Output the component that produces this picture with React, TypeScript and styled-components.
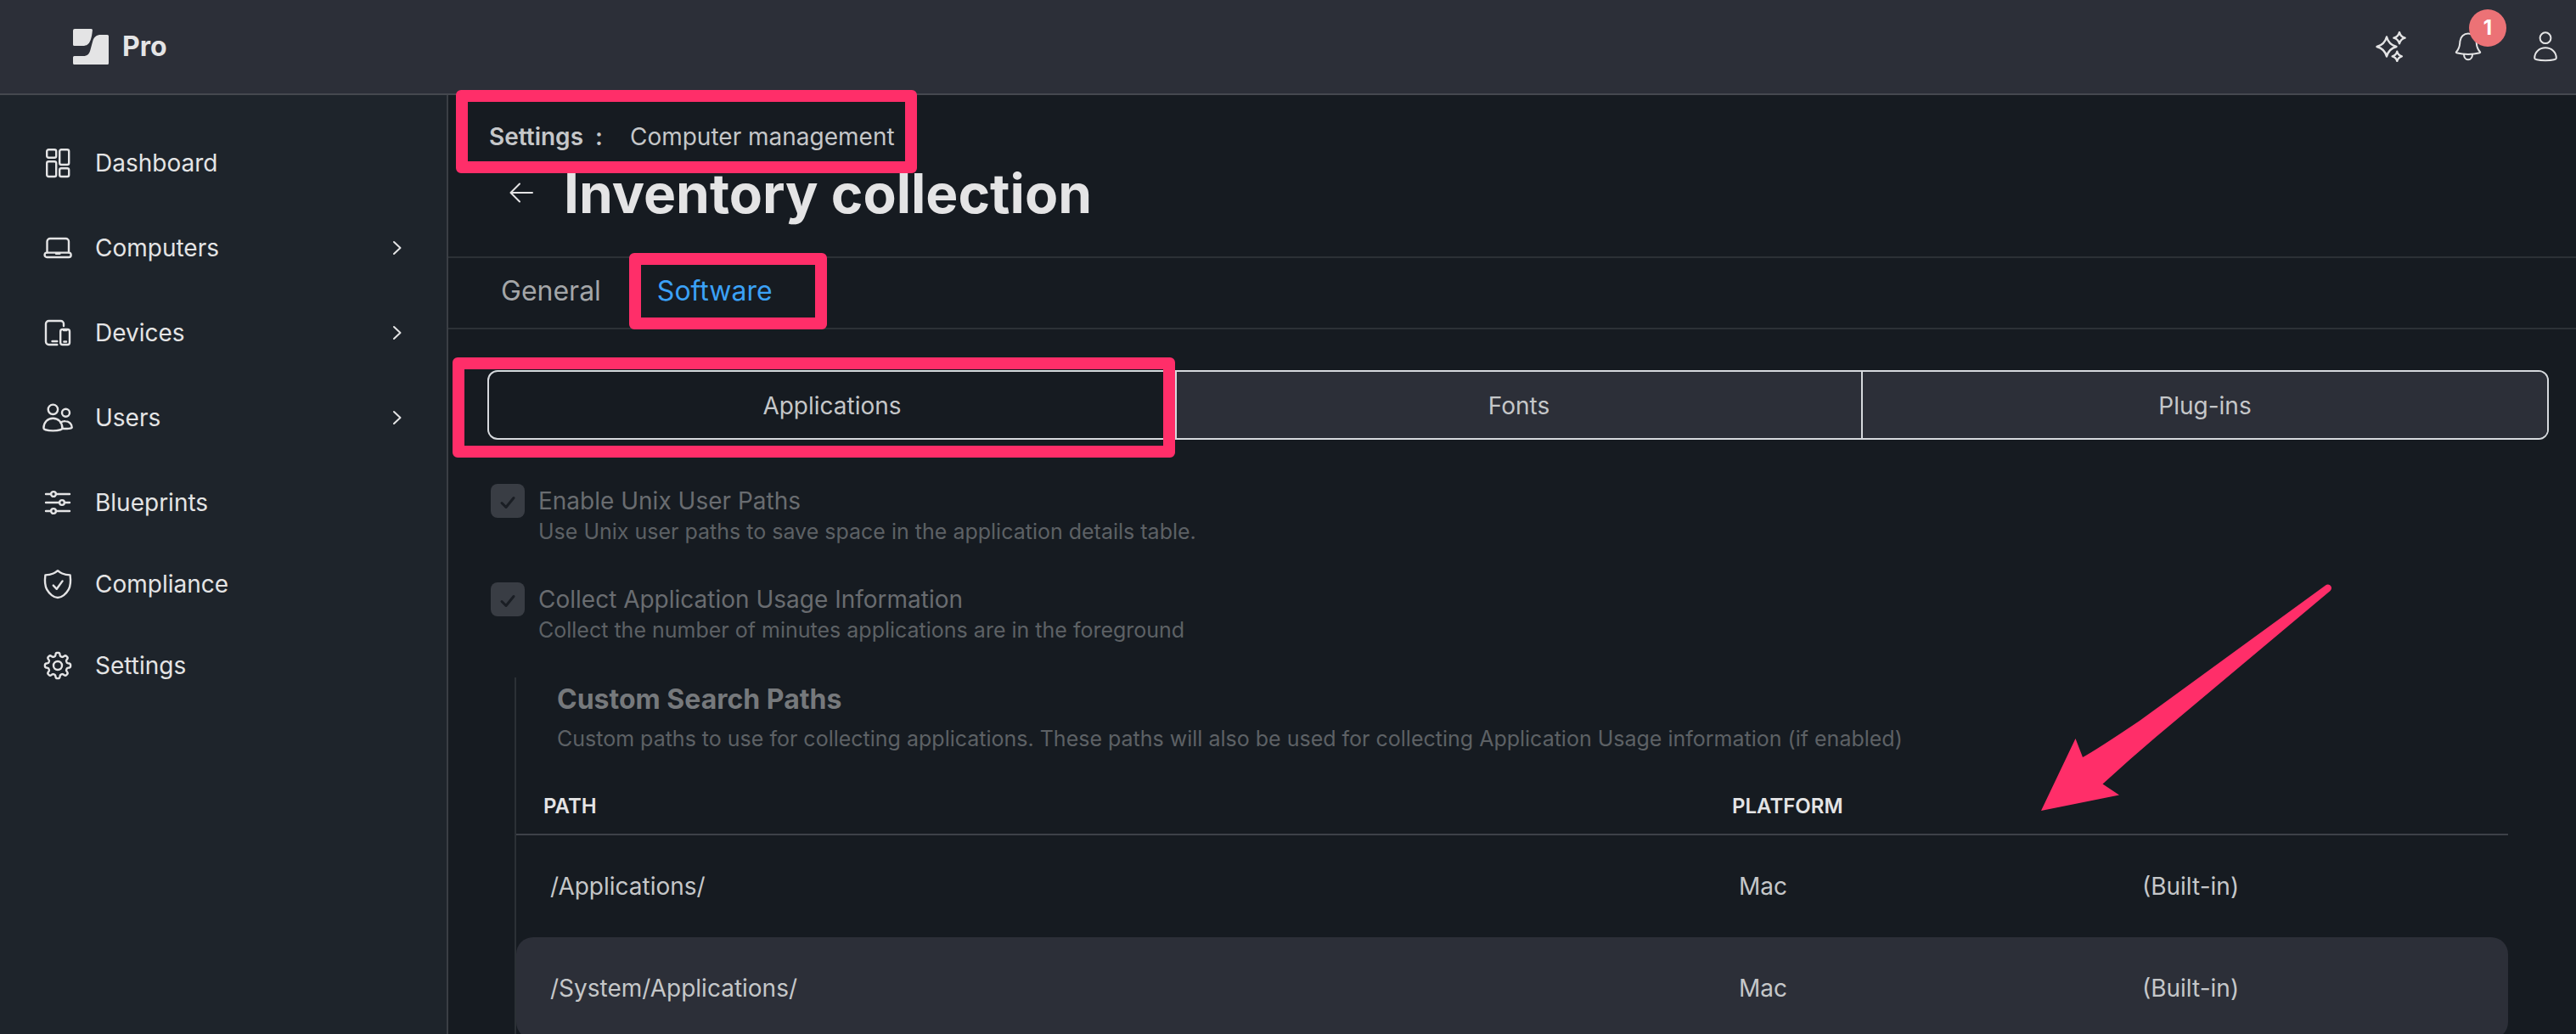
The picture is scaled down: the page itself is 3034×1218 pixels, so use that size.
import React from "react";
import styled, { createGlobalStyle } from "styled-components";

const c = {
  page: "#161b21",
  sidebar: "#1e242b",
  raised: "#2c2f38",
  rule: "#2c3136",
  strongRule: "#3d4148",
  bright: "#e4e4e5",
  text: "#c5c7c9",
  tab: "#a4a6a8",
  mutedTitle: "#76797c",
  muted: "#696c70",
  faint: "#5d6165",
  outline: "#d6d9dd",
  link: "#3ba1f6",
  mark: "#ff2e69",
};

const GlobalStyle = createGlobalStyle`
  *, *::before, *::after { box-sizing: border-box; }
  body {
    margin: 0;
    background: ${c.page};
    color: ${c.text};
    font-family: Inter, "Liberation Sans", sans-serif;
    font-size: 28px;
  }
  button { font: inherit; color: inherit; background: none; border: 0; padding: 0; cursor: pointer; }
  a { color: inherit; text-decoration: none; }
  h1, h2, p, ul { margin: 0; padding: 0; }
  ul { list-style: none; }
  svg { display: block; flex: none; }
`;

const Shell = styled.div`
  position: relative;
  height: 100vh;
  display: flex;
  flex-direction: column;
  overflow: auto;
  scrollbar-width: none;
`;

const TopBar = styled.header`
  flex: none;
  height: 112px;
  padding: 0 18px 0 86px;
  display: flex;
  align-items: center;
  justify-content: space-between;
  background: ${c.raised};
  border-bottom: 2px solid #45484f;
  color: ${c.bright};
`;

const Brand = styled.a`
  display: flex;
  align-items: center;
  gap: 16px;
  font-size: 32px;
  line-height: 40px;
  font-weight: 700;
`;

const Tools = styled.div`
  display: flex;
  gap: 55px;
`;

const ToolButton = styled.button`
  position: relative;
  height: 36px;
`;

const Badge = styled.span`
  position: absolute;
  left: 19px;
  bottom: 18px;
  width: 44px;
  height: 44px;
  border-radius: 50%;
  background: #ec7276;
  color: #fff;
  font-size: 24px;
  line-height: 44px;
  font-weight: 700;
  text-align: center;
`;

const Body = styled.div`
  flex: 1 0 auto;
  display: flex;
`;

const Sidebar = styled.nav`
  flex: none;
  width: 528px;
  padding-top: 32px;
  background: ${c.sidebar};
  border-right: 2px solid #3a3e44;
  color: ${c.bright};
`;

const NavList = styled.ul<{ $gap?: number }>`
  display: grid;
  gap: ${(p) => p.$gap ?? 0}px;
`;

const NavLink = styled.a`
  display: flex;
  align-items: center;
  gap: 26px;
  height: 96px;
  padding: 0 40px 0 50px;
`;

const NavLabel = styled.span`
  flex: 1;
`;

const Main = styled.main`
  flex: 1;
  min-width: 0;
`;

const Highlight = styled.span<{ $inset: string }>`
  position: absolute;
  inset: ${(p) => p.$inset};
  z-index: 2;
  border: 14px solid ${c.mark};
  border-radius: 6px;
  pointer-events: none;
`;

const PageHead = styled.header`
  display: flex;
  flex-direction: column;
  align-items: flex-start;
  gap: 12px;
  padding: 32px 32px 34px 46px;
`;

const Breadcrumb = styled.nav`
  position: relative;
  display: flex;
  padding-left: 2px;
  line-height: 34px;
  margin-bottom: -2px;
`;

const CrumbRoot = styled.a`
  font-weight: 600;
`;

const CrumbMark = styled.span`
  padding: 0 32px 0 14px;
  font-weight: 600;
`;

const TitleRow = styled.div`
  display: flex;
  align-items: center;
  gap: 34px;
  padding-left: 24px;
  color: ${c.bright};
`;

const Title = styled.h1`
  font-size: 64px;
  line-height: 80px;
  font-weight: 700;
`;

const Tabs = styled.div`
  display: flex;
  gap: 34px;
  padding-left: 46px;
  border-top: 2px solid ${c.rule};
  border-bottom: 2px solid ${c.rule};
`;

const Tab = styled.button<{ $active?: boolean }>`
  position: relative;
  padding: 19px 16px 23px;
  font-size: 32px;
  line-height: 40px;
  color: ${(p) => (p.$active ? c.link : c.tab)};
`;

const Content = styled.div`
  padding: 48px 32px 0 46px;
`;

const Segments = styled.div`
  position: relative;
  display: grid;
  grid-template-columns: repeat(3, 1fr);
  height: 82px;
  border: 2px solid ${c.outline};
  border-radius: 12px;
`;

const Segment = styled.button<{ $active?: boolean }>`
  padding-top: 2px;
  background: ${(p) => (p.$active ? "transparent" : c.raised)};
  & + & {
    border-left: 2px solid ${c.outline};
  }
  &:last-of-type {
    border-radius: 0 10px 10px 0;
  }
`;

const Fields = styled.div`
  display: grid;
  gap: 44px;
  padding: 52px 0 40px 4px;
`;

const Field = styled.div`
  display: grid;
  grid-template-columns: 40px 1fr;
  column-gap: 16px;
`;

const CheckWrap = styled.span`
  position: relative;
  width: 40px;
  height: 40px;
  svg {
    position: absolute;
    inset: 0;
    color: #1a1e24;
    pointer-events: none;
  }
`;

const CheckInput = styled.input`
  appearance: none;
  display: block;
  width: 40px;
  height: 40px;
  margin: 0;
  border-radius: 8px;
  background: #393d44;
`;

const FieldLabel = styled.label`
  line-height: 40px;
  color: ${c.muted};
`;

const Hint = styled.p`
  font-size: 25px;
  line-height: 32px;
  color: ${c.faint};
`;

const FieldHint = styled(Hint)`
  grid-column: 2;
`;

const Section = styled.section`
  margin: 0 48px 0 32px;
  padding-top: 6px;
  border-left: 2px solid ${c.rule};
`;

const SectionHead = styled.div`
  display: grid;
  gap: 10px;
  padding: 0 0 32px 48px;
`;

const SectionTitle = styled.h2`
  font-size: 32px;
  line-height: 40px;
  font-weight: 700;
  color: ${c.mutedTitle};
`;

const Table = styled.table`
  width: 100%;
  table-layout: fixed;
  border-collapse: separate;
  border-spacing: 0;
`;

const HeadCell = styled.th<{ $width?: number }>`
  width: ${(p) => (p.$width ? `${p.$width}px` : "auto")};
  height: 66px;
  padding: 0 32px;
  border-bottom: 2px solid ${c.strongRule};
  color: ${c.bright};
  font-size: 24px;
  line-height: 32px;
  font-weight: 600;
  text-align: left;
`;

const Row = styled.tr`
  &:nth-child(even) td {
    background: ${c.raised};
  }
  td:first-child {
    border-radius: 20px 0 0 20px;
  }
  td:last-child {
    border-radius: 0 20px 20px 0;
  }
`;

const Cell = styled.td`
  height: 120px;
  padding: 0 40px;
`;

const Pointer = styled.svg`
  position: absolute;
  top: 680px;
  right: 284px;
  z-index: 2;
  pointer-events: none;
`;

const Icon = ({ children, size = 36, stroke = 2.4 }: { children: React.ReactNode; size?: number; stroke?: number }) => (
  <svg
    width={size}
    height={size}
    viewBox={`0 0 ${size} ${size}`}
    fill="none"
    stroke="currentColor"
    strokeWidth={stroke}
    strokeLinecap="round"
    strokeLinejoin="round"
    aria-hidden="true"
  >
    {children}
  </svg>
);

/* Eight flat-topped teeth traced around the centre. */
const gearPath = (() => {
  const points: string[] = [];
  for (let i = 0; i < 240; i++) {
    const a = (i / 240) * Math.PI * 2;
    const wave = Math.tanh(2.2 * Math.cos(8 * a)) / Math.tanh(2.2);
    const r = 13.2 + 1.9 * wave;
    points.push(`${(18 + r * Math.cos(a)).toFixed(2)} ${(18 + r * Math.sin(a)).toFixed(2)}`);
  }
  return `M${points.join("L")}Z`;
})();

const star = (x: number, y: number, r: number) => {
  const k = r * 0.21;
  return `M${x} ${y - r}Q${x + k} ${y - k} ${x + r} ${y}Q${x + k} ${y + k} ${x} ${y + r}Q${x - k} ${y + k} ${x - r} ${y}Q${x - k} ${y - k} ${x} ${y - r}Z`;
};

const icons = {
  dashboard: (
    <Icon>
      <rect x="5.2" y="2.3" width="11" height="9.4" rx="2" />
      <rect x="20.2" y="2.3" width="11" height="17.7" rx="2" />
      <rect x="5.2" y="16.3" width="11" height="17.7" rx="2" />
      <rect x="20.2" y="24.3" width="11" height="9.7" rx="2" />
    </Icon>
  ),
  computers: (
    <Icon>
      <path d="M5.5 23.2V10.5A3.5 3.5 0 0 1 9 7h18.5a3.5 3.5 0 0 1 3.5 3.5v12.7" />
      <rect x="2.6" y="23.6" width="31" height="5.4" rx="2.6" />
      <path d="M16 24.8h4.4" />
    </Icon>
  ),
  devices: (
    <Icon>
      <path d="M25 10V7.5A3.5 3.5 0 0 0 21.500 4H7.500A3.500 3.500 0 0 0 4 7.500v21A3.500 3.500 0 0 0 7.500 32h9.800" />
      <path d="M11.500 28h5.800" />
      <rect x="21.2" y="14" width="10.8" height="18" rx="2.5" />
      <path d="M25 15h3.400M25.400 28.500h2.600" />
    </Icon>
  ),
  users: (
    <Icon>
      <circle cx="12.4" cy="8.3" r="5.7" />
      <circle cx="27.5" cy="12.3" r="4.5" />
      <path d="M1.4 30.200c0-6.500 4.600-11.500 11-11.500s11 5 11 11.500c0 1.800-4.800 3.200-11 3.200s-11-1.400-11-3.200Z" />
      <path d="M21.400 23.700c1.600-1.200 3.600-1.700 5.600-1.600 4.500.1 7.700 3.300 7.700 7.300 0 1.300-6.500 2.100-11.400 1.300" />
    </Icon>
  ),
  blueprints: (
    <Icon>
      <path d="M4 8h6M16 8h16M4 18h16M26 18h6M4 28h6M16 28h16" />
      <circle cx="13" cy="8" r="2.9" />
      <circle cx="23" cy="18" r="2.9" />
      <circle cx="13" cy="28" r="2.9" />
    </Icon>
  ),
  compliance: (
    <Icon>
      <path d="M18 2.200c1.300 1 2.600 2.100 5.200 3.300 3 1.400 6.400 1.900 9.400 1.900.7 5.500 1.200 11.500-1.800 17-2.800 5-8 9.600-12.800 9.600s-10-4.600-12.800-9.600c-3-5.500-2.500-11.500-1.800-17 3 0 6.400-.5 9.400-1.900 2.600-1.200 3.900-2.300 5.200-3.300Z" />
      <path d="m12.800 19.600 4 4.200 6.800-9.400" />
    </Icon>
  ),
  settings: (
    <Icon>
      <path d={gearPath} />
      <circle cx="18" cy="18" r="5" />
    </Icon>
  ),
};

const Chevron = () => (
  <Icon stroke={2}>
    <path d="m14 11 7.500 7-7.500 7" />
  </Icon>
);

const CheckMark = () => (
  <Icon size={40} stroke={3}>
    <path d="m13 22.500 5 5 9-11" />
  </Icon>
);

type NavEntry = { label: string; icon: React.ReactNode; expandable?: boolean };

const primaryNav: NavEntry[] = [
  { label: "Dashboard", icon: icons.dashboard },
  { label: "Computers", icon: icons.computers, expandable: true },
  { label: "Devices", icon: icons.devices, expandable: true },
  { label: "Users", icon: icons.users, expandable: true },
  { label: "Blueprints", icon: icons.blueprints },
];

const secondaryNav: NavEntry[] = [
  { label: "Compliance", icon: icons.compliance },
  { label: "Settings", icon: icons.settings },
];

const NavItems = ({ items, gap }: { items: NavEntry[]; gap?: number }) => (
  <NavList $gap={gap}>
    {items.map((item) => (
      <li key={item.label}>
        <NavLink href="#">
          {item.icon}
          <NavLabel>{item.label}</NavLabel>
          {item.expandable && <Chevron />}
        </NavLink>
      </li>
    ))}
  </NavList>
);

const CheckField = ({ id, label, hint }: { id: string; label: string; hint: string }) => (
  <Field>
    <CheckWrap>
      <CheckInput id={id} type="checkbox" defaultChecked disabled aria-describedby={`${id}-hint`} />
      <CheckMark />
    </CheckWrap>
    <FieldLabel htmlFor={id}>{label}</FieldLabel>
    <FieldHint id={`${id}-hint`}>{hint}</FieldHint>
  </Field>
);

const paths = [
  { path: "/Applications/", platform: "Mac", note: "(Built-in)" },
  { path: "/System/Applications/", platform: "Mac", note: "(Built-in)" },
];

export default function App() {
  return (
    <Shell>
      <GlobalStyle />
      <TopBar>
        <Brand href="#">
          <svg width="42" height="42" viewBox="0 0 42 42" fill="currentColor" aria-hidden="true">
            <path d="M2 0h19.500q1.500 0 1.400 1.500C22.500 6 22 9.500 20.500 13.500 18.800 18 16 20 11.500 20H1.500Q0 20 0 18.500V2Q0 0 2 0Z" />
            <path d="M33 7h7.500Q42 7 42 8.500v32q0 1.500-1.500 1.500h-39Q0 42 0 40.500v-7Q0 32 1.500 32H12c5 0 7-2 8.500-7.500l2.700-10C24.600 9.500 27.500 7 33 7Z" />
          </svg>
          Pro
        </Brand>
        <Tools>
          <ToolButton aria-label="Assistant">
            <Icon>
              <path d={star(13, 18, 11.5)} />
              <path d={star(28, 7.7, 6.6)} />
              <path d={star(25.3, 29.3, 5.6)} />
            </Icon>
          </ToolButton>
          <ToolButton aria-label="Notifications">
            <Icon stroke={2}>
              <path d="M18 2.600c-5 0-9 3.600-9.600 9-.5 4.500.2 7.400-4.400 12.600-.4.500-.2.900.4 1 4.300 1.100 8.800 1.700 13.600 1.700s9.300-.6 13.600-1.700c.6-.1.800-.5.400-1-4.600-5.200-3.900-8.100-4.400-12.600-.6-5.400-4.600-9-9.600-9Z" />
              <path d="M13 27c0 3.400 2 6.300 5 6.300s5-2.900 5-6.300" />
            </Icon>
            <Badge>1</Badge>
          </ToolButton>
          <ToolButton aria-label="Account">
            <Icon stroke={2}>
              <circle cx="18" cy="7.7" r="6.4" />
              <path d="M5.200 31.500c0-7 5.600-12.200 12.800-12.200s12.800 5.200 12.800 12.200c0 3.700-25.600 3.700-25.600 0Z" />
            </Icon>
          </ToolButton>
        </Tools>
      </TopBar>
      <Body>
        <Sidebar aria-label="Main">
          <NavItems items={primaryNav} gap={4} />
          <NavItems items={secondaryNav} />
        </Sidebar>
        <Main>
          <PageHead>
            <Breadcrumb aria-label="Breadcrumb">
              <CrumbRoot href="#">Settings</CrumbRoot>
              <CrumbMark>:</CrumbMark>
              <a href="#">Computer management</a>
              <Highlight $inset="-38px -26px -26px -37px" />
            </Breadcrumb>
            <TitleRow>
              <button aria-label="Back">
                <Icon size={32} stroke={2}>
                  <path d="M29 15H4M14 4.500 3.500 15 14 25.500" />
                </Icon>
              </button>
              <Title>Inventory collection</Title>
            </TitleRow>
          </PageHead>
          <Tabs role="tablist">
            <Tab role="tab" aria-selected={false}>
              General
            </Tab>
            <Tab role="tab" aria-selected $active>
              Software
              <Highlight $inset="-6px -48px -2px -17px" />
            </Tab>
          </Tabs>
          <Content>
            <Segments>
              <Segment $active>Applications</Segment>
              <Segment>Fonts</Segment>
              <Segment>Plug-ins</Segment>
              <Highlight $inset="-17px 66.666% -23px -43px" />
            </Segments>
            <Fields>
              <CheckField
                id="unix-paths"
                label="Enable Unix User Paths"
                hint="Use Unix user paths to save space in the application details table."
              />
              <CheckField
                id="usage-info"
                label="Collect Application Usage Information"
                hint="Collect the number of minutes applications are in the foreground"
              />
            </Fields>
            <Section>
              <SectionHead>
                <SectionTitle>Custom Search Paths</SectionTitle>
                <Hint>
                  Custom paths to use for collecting applications. These paths will also be used for collecting
                  Application Usage information (if enabled)
                </Hint>
              </SectionHead>
              <Table>
                <thead>
                  <tr>
                    <HeadCell>PATH</HeadCell>
                    <HeadCell $width={475}>PLATFORM</HeadCell>
                    <HeadCell $width={471} aria-label="Source" />
                  </tr>
                </thead>
                <tbody>
                  {paths.map((row) => (
                    <Row key={row.path}>
                      <Cell>{row.path}</Cell>
                      <Cell>{row.platform}</Cell>
                      <Cell>{row.note}</Cell>
                    </Row>
                  ))}
                </tbody>
              </Table>
            </Section>
          </Content>
        </Main>
      </Body>
      <Pointer width="350" height="280" viewBox="0 0 350 280" fill={c.mark} aria-hidden="true">
        <path d="M4 275 44.500 190 53 212Q68 204 120 169L339 9.500A4 4 0 0 1 344.500 16L143 185Q110 213 76.500 243.500L96 256.500Z" />
      </Pointer>
    </Shell>
  );
}
